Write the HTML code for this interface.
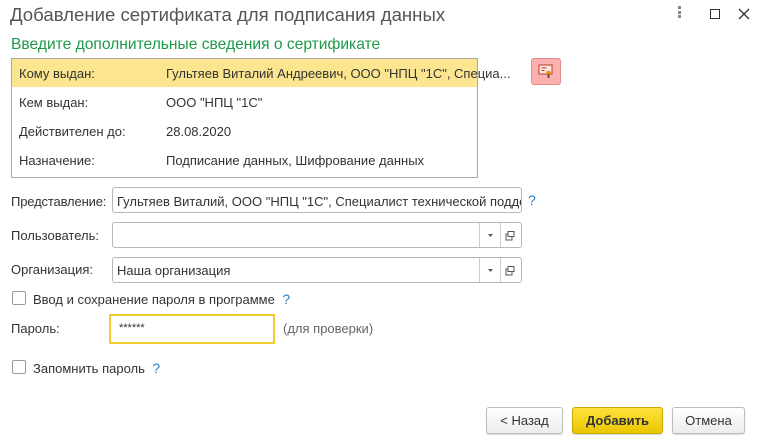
<!DOCTYPE html>
<html><head><meta charset="utf-8"><style>
*{box-sizing:border-box;margin:0;padding:0}
body{width:762px;height:442px;background:#fff;font-family:"Liberation Sans",Arial,sans-serif;font-size:13px;color:#333;position:relative;overflow:hidden}
.a{position:absolute;white-space:nowrap}
.inp{position:absolute;border:1px solid #b8b8b8;border-radius:3px;background:#fff;height:26px}
.q{color:#2a7ec8;font-size:14px}
.cb{position:absolute;width:14px;height:14px;border:1px solid #9a9a9a;border-radius:2px;background:#fff}
.btn{position:absolute;height:27px;border:1px solid #bdbdbd;border-radius:3px;background:linear-gradient(#fff,#ececec);text-align:center;line-height:25px;font-size:13px;color:#333;box-shadow:0 1px 1px rgba(0,0,0,.15)}
.dv{position:absolute;top:0;bottom:0;border-left:1px solid #ccc}
</style></head><body>
<div class="a" style="left:10px;top:4px;font-size:18.6px;color:#555">Добавление сертификата для подписания данных</div>
<div class="a" style="left:678px;top:6px;width:4px;height:14px">
<div style="width:3px;height:3px;background:#888;margin-bottom:1.5px"></div><div style="width:3px;height:3px;background:#888;margin-bottom:1.5px"></div><div style="width:3px;height:3px;background:#888"></div></div>
<div class="a" style="left:710px;top:9px;width:10px;height:10px;border:1.3px solid #333"></div>
<svg class="a" style="left:738px;top:8px" width="12" height="12"><path d="M1 1L11 11M11 1L1 11" stroke="#333" stroke-width="1.3"/></svg>
<div class="a" style="left:11px;top:36px;font-size:15.6px;color:#1c9a48">Введите дополнительные сведения о сертификате</div>
<div class="a" style="left:11px;top:58px;width:467px;height:120px;border:1px solid #a8a8a8"></div>
<div class="a" style="left:12px;top:59px;width:465px;height:28px;background:#fbe58f"></div>
<div class="a" style="left:19px;top:66px">Кому выдан:</div><div class="a" style="left:166px;top:66px">Гультяев Виталий Андреевич, ООО "НПЦ "1С", Специа...</div>
<div class="a" style="left:19px;top:95px">Кем выдан:</div><div class="a" style="left:166px;top:95px">ООО "НПЦ "1С"</div>
<div class="a" style="left:19px;top:124px">Действителен до:</div><div class="a" style="left:166px;top:124px">28.08.2020</div>
<div class="a" style="left:19px;top:153px">Назначение:</div><div class="a" style="left:166px;top:153px">Подписание данных, Шифрование данных</div>
<div class="a" style="left:531px;top:58px;width:30px;height:27px;background:#fdb0b0;border:1px solid #e48a8a;border-radius:3px"></div>
<svg class="a" style="left:538px;top:63px" width="16" height="16"><rect x="1" y="2" width="13" height="9" fill="#fde8e0" stroke="#c0392b" stroke-width="1"/><path d="M3.5 5h5M3.5 7.5h3" stroke="#c0392b"/><circle cx="10.5" cy="10" r="2.3" fill="#f08a00"/><rect x="9.5" y="11" width="2" height="4" fill="#555"/></svg>
<div class="a" style="left:11px;top:194px;letter-spacing:-0.15px">Представление:</div>
<div class="inp" style="left:112px;top:187px;width:410px;overflow:hidden;padding:6px 4px;white-space:nowrap">Гультяев Виталий, ООО "НПЦ "1С", Специалист технической подде</div>
<div class="a q" style="left:528px;top:192px">?</div>
<div class="a" style="left:11px;top:228px">Пользователь:</div>
<div class="inp" style="left:112px;top:222px;width:410px"><div class="dv" style="left:366px"></div><div class="dv" style="left:387px"></div></div>
<div class="a" style="left:11px;top:262px">Организация:</div>
<div class="inp" style="left:112px;top:257px;width:410px;padding:5px 4px">Наша организация<div class="dv" style="left:366px"></div><div class="dv" style="left:387px"></div></div>
<svg class="a" style="left:486px;top:230px" width="30" height="12"><path d="M2 4h5l-2.5 3z" fill="#555"/><rect x="20" y="4" width="6" height="6" fill="none" stroke="#555"/><rect x="22" y="1.5" width="6" height="5" fill="#fff" stroke="#555"/></svg>
<svg class="a" style="left:486px;top:265px" width="30" height="12"><path d="M2 4h5l-2.5 3z" fill="#555"/><rect x="20" y="4" width="6" height="6" fill="none" stroke="#555"/><rect x="22" y="1.5" width="6" height="5" fill="#fff" stroke="#555"/></svg>
<div class="cb" style="left:12px;top:291px"></div>
<div class="a" style="left:33px;top:291px">Ввод и сохранение пароля в программе <span class="q">&nbsp;?</span></div>
<div class="a" style="left:11px;top:321px">Пароль:</div>
<div class="a" style="left:109px;top:314px;width:166px;height:30px;border:2px solid #f0cc30;padding:6px 8px;font-size:11px">******</div>
<div class="a" style="left:283px;top:321px;color:#666">(для проверки)</div>
<div class="cb" style="left:12px;top:360px"></div>
<div class="a" style="left:33px;top:360px">Запомнить пароль <span class="q">&nbsp;?</span></div>
<div class="btn" style="left:486px;top:407px;width:77px">&lt; Назад</div>
<div class="btn" style="left:572px;top:407px;width:91px;background:linear-gradient(#fde23b,#eac600);border-color:#c8a900;font-weight:bold">Добавить</div>
<div class="btn" style="left:672px;top:407px;width:73px">Отмена</div>
</body></html>
